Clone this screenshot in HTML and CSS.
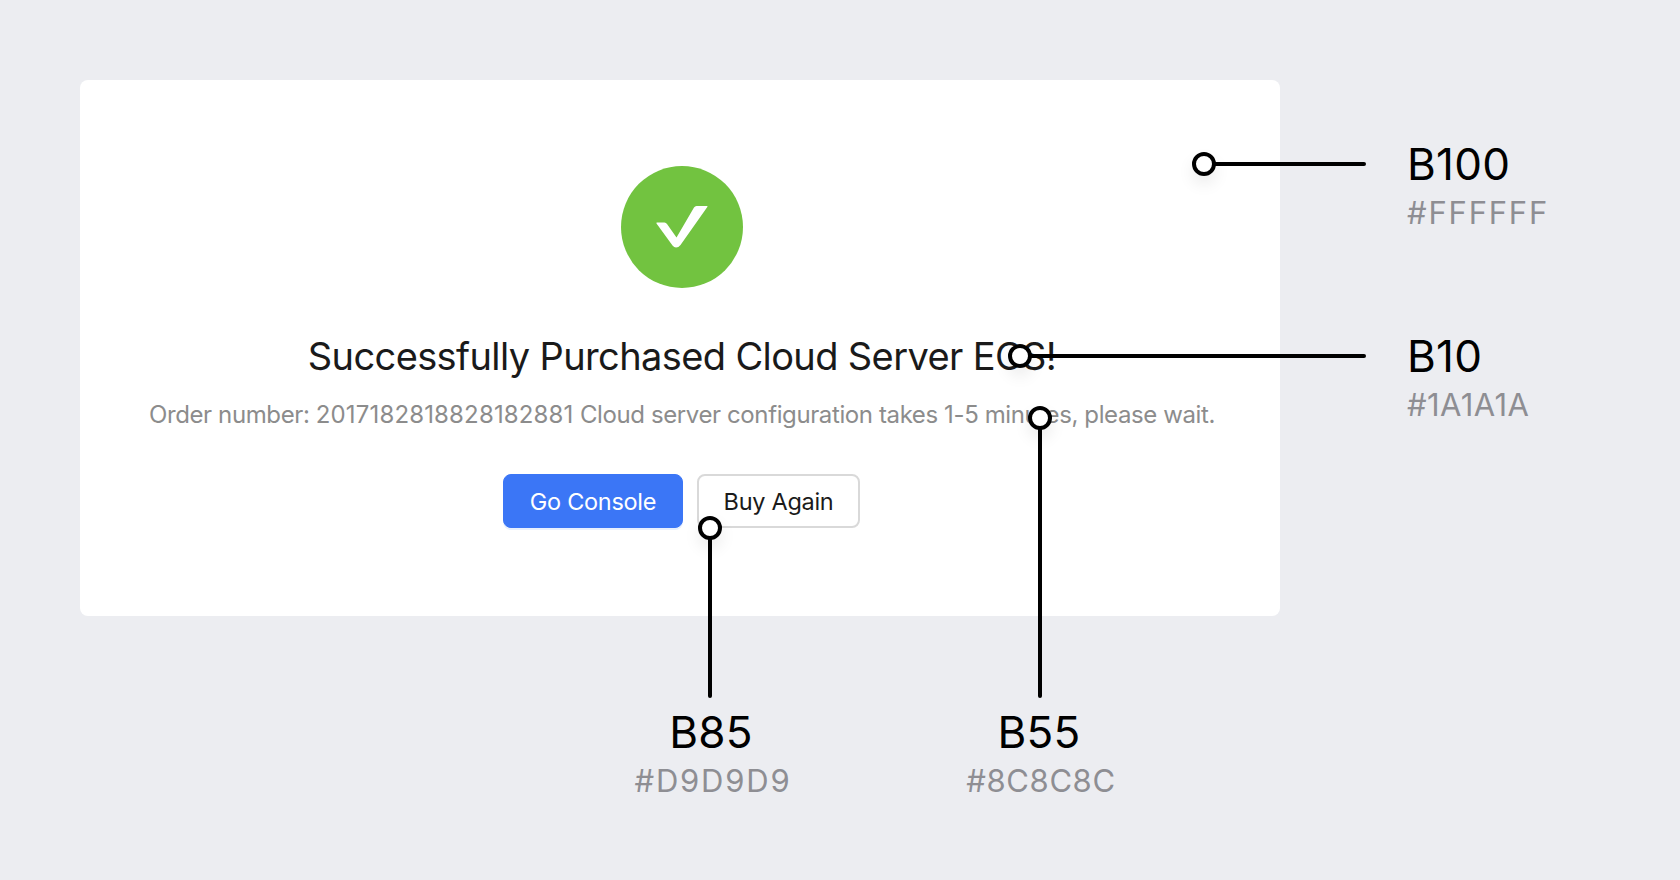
FILE: index.html
```html
<!DOCTYPE html>
<html lang="en">
<head>
<meta charset="utf-8">
<title>Color usage</title>
<link rel="stylesheet" href="styles.css">
</head>
<body>
<main class="stage">
  <section class="card">
    <svg class="check" width="122" height="122" viewBox="0 0 122 122" aria-hidden="true">
      <circle cx="61" cy="61" r="61" fill="#72c340"/>
      <path d="M36 56.5H43.5Q45 56.500 46 58L55.500 71.500L73 41.500Q74 40 75.500 40H86Q87 40 86.300 41L59.500 79Q57.500 81.500 55 81.500Q53 81.500 51.500 79.500L35.500 57.500Q35 56.500 36 56.500Z" fill="#fff"/>
    </svg>
    <h1 class="title">Successfully Purchased Cloud Server ECS!</h1>
    <p class="desc">Order number: <span class="order-no">2017182818828182881</span> Cloud server configuration takes 1-5 minutes, please wait.</p>
    <div class="actions">
      <button class="btn btn-primary" type="button">Go Console</button>
      <button class="btn btn-default" type="button">Buy Again</button>
    </div>
  </section>

  <div class="line line-h line-b100"></div>
  <div class="line line-h line-b10"></div>
  <div class="line line-v line-b55"></div>
  <div class="line line-v line-b85"></div>

  <span class="dot dot-b100"></span>
  <span class="dot dot-b10"></span>
  <span class="dot dot-b55"></span>
  <span class="dot dot-b85"></span>

  <div class="label label-b100"><strong>B100</strong><span>#FFFFFF</span></div>
  <div class="label label-b10"><strong>B10</strong><span class="hex-tight">#1A1A1A</span></div>
  <div class="label label-center label-b85"><strong>B85</strong><span>#D9D9D9</span></div>
  <div class="label label-center label-b55"><strong>B55</strong><span class="hex-mid">#8C8C8C</span></div>
</main>
</body>
</html>
```
FILE: styles.css
```css
* { box-sizing: border-box; }
html, body { margin: 0; height: 100%; }
body { background: #ecedf1; overflow: hidden; font-family: Inter, "Liberation Sans", sans-serif; }
.stage { position: relative; width: 1680px; height: 880px; padding: 80px; }

.card {
  width: 1200px;
  height: 536px;
  background: #fff;
  border-radius: 8px;
  padding: 86px 0 0 4px;
  display: flex;
  flex-direction: column;
  align-items: center;
}
.check { display: block; flex: none; }
.title {
  margin: 43px 0 0;
  font-size: 38px;
  line-height: 50px;
  letter-spacing: -0.62px;
  font-weight: 400;
  color: #1a1a1a;
  white-space: nowrap;
}
.desc {
  margin: 17px 0 0;
  font-size: 24px;
  line-height: 34px;
  letter-spacing: -0.39px;
  color: #8c8c8c;
  white-space: nowrap;
}
.order-no { letter-spacing: 0.15px; }
.actions { display: flex; gap: 14px; margin: 42px 1px 0 0; }
.btn {
  height: 54px;
  border-radius: 8px;
  font-family: inherit;
  font-size: 23.5px;
  letter-spacing: -0.3px;
  padding: 0;
}
.btn-primary { width: 180px; background: #3b76f6; border: 1px solid #3b76f6; color: #fff; box-shadow: 0 2px 0 #e8f0fe; }
.btn-default { width: 163px; background: #fff; border: 2px solid #d9d9d9; color: #1a1a1a; }

.line { position: absolute; background: #000; border-radius: 2px; }
.line-h { height: 4px; right: 314px; }
.line-v { width: 4px; }
.line-b100 { left: 1204px; top: 162px; }
.line-b10 { left: 1020px; top: 354px; }
.line-b55 { left: 1038px; top: 418px; height: 280px; }
.line-b85 { left: 708px; top: 528px; height: 170px; }

.dot {
  position: absolute;
  width: 24px;
  height: 24px;
  border: 4px solid #000;
  border-radius: 50%;
  background: #fff;
  box-shadow: 0 8px 16px rgba(0, 0, 0, 0.08);
}
.dot-b100 { left: 1192px; top: 152px; }
.dot-b10 { left: 1008px; top: 344px; }
.dot-b55 { left: 1028px; top: 406px; }
.dot-b85 { left: 698px; top: 516px; }

.label { position: absolute; display: flex; flex-direction: column; }
.label strong { font-size: 44px; line-height: 50px; font-weight: 400; letter-spacing: 0.3px; color: #000; }
.label span { margin-top: 3px; font-size: 31px; line-height: 42px; letter-spacing: 1.8px; color: #8e8e93; }
.label span.hex-tight { letter-spacing: 0.4px; }
.label span.hex-mid { letter-spacing: 0.6px; }
.label-center { align-items: center; width: 240px; }
.label-center strong { margin-right: 4px; }
.label-b100 { left: 1407px; top: 139px; }
.label-b10 { left: 1407px; top: 331px; }
.label-b85 { left: 593px; top: 707px; }
.label-b55 { left: 921px; top: 707px; }
```
